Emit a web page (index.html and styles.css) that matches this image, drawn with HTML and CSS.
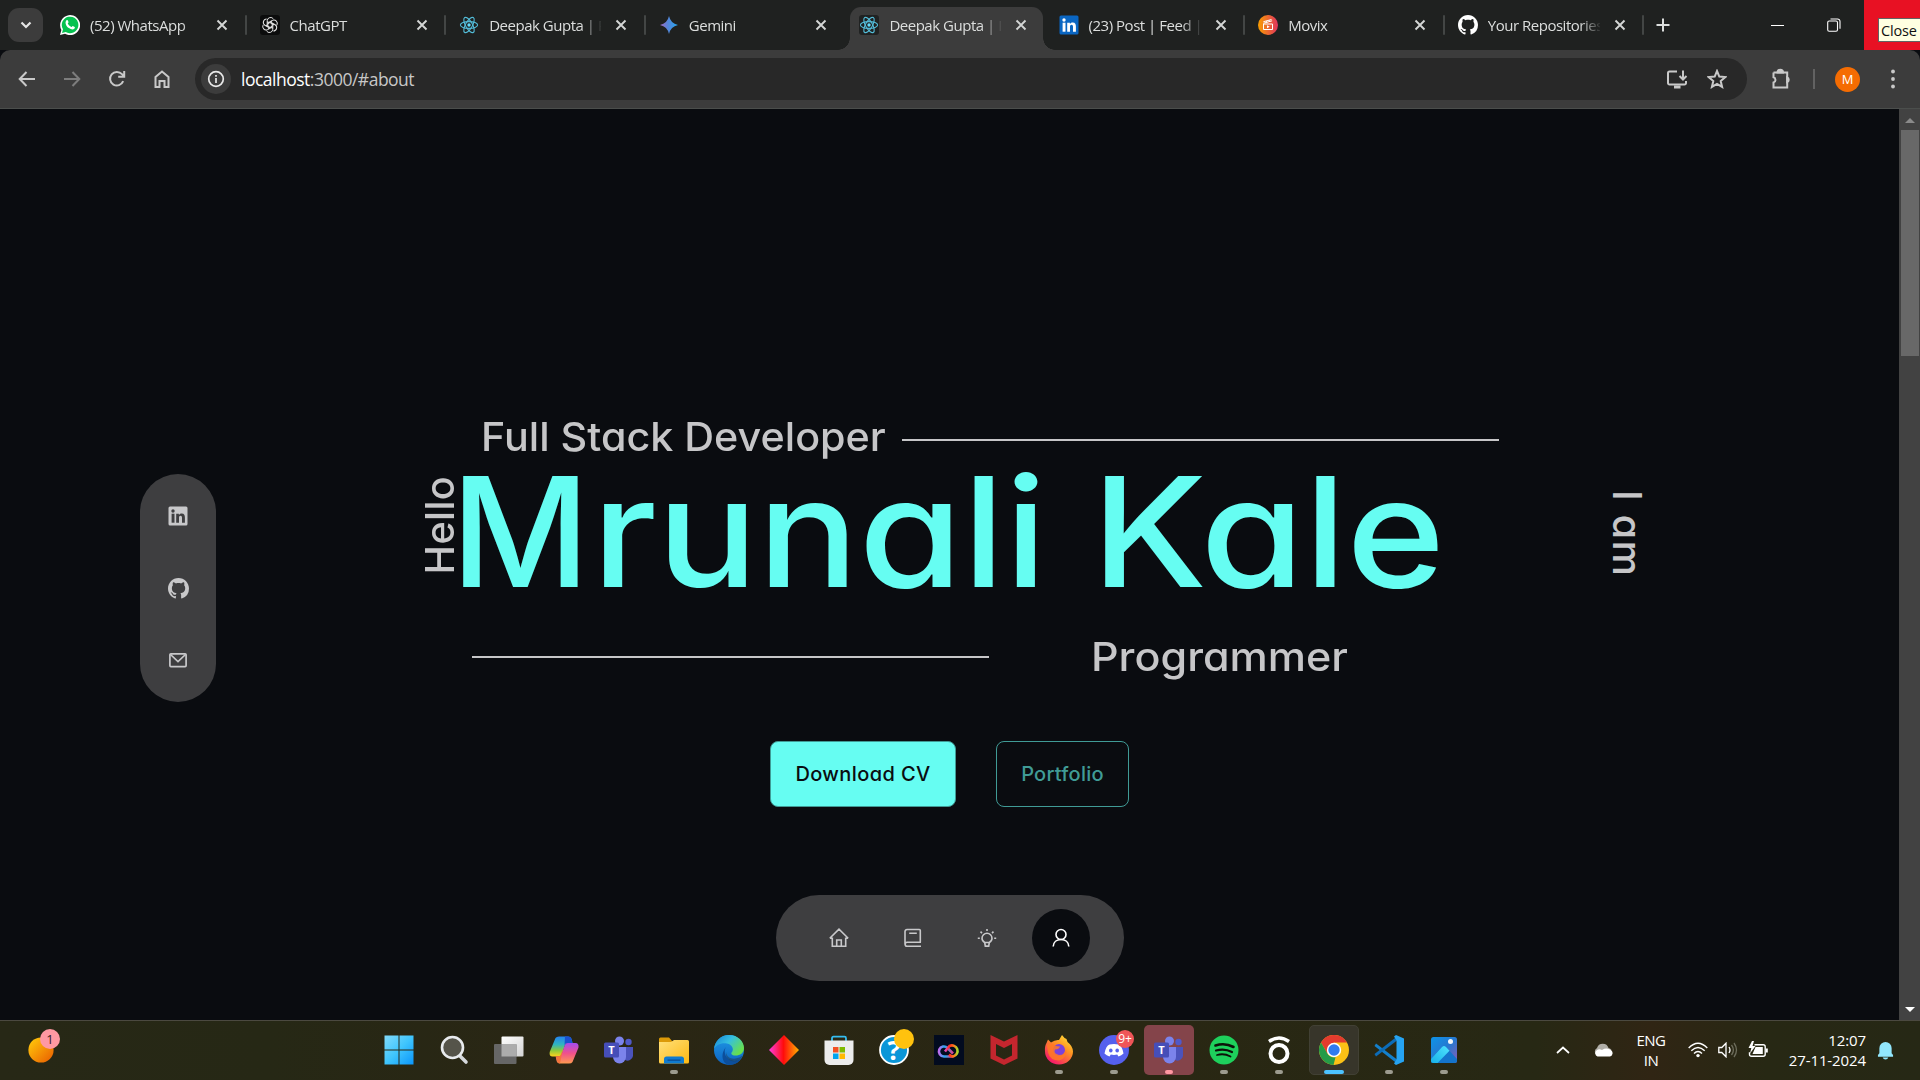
FILE: index.html
```html
<!DOCTYPE html>
<html lang="en">
<head>
<meta charset="utf-8">
<title>Deepak Gupta | Portfolio</title>
<link rel="stylesheet" href="styles.css">
</head>
<body>
<svg class="defs" aria-hidden="true">
  <defs>
    <linearGradient id="gWeather" x1="0" y1="0" x2="1" y2="1"><stop offset=".1" stop-color="#ffc40a"/><stop offset="1" stop-color="#e85a00"/></linearGradient>
    <linearGradient id="gWin" gradientUnits="userSpaceOnUse" x1="0" y1="0" x2="30" y2="30"><stop offset="0" stop-color="#84dcfb"/><stop offset=".5" stop-color="#3fc5fd"/><stop offset="1" stop-color="#0994fb"/></linearGradient>
    <linearGradient id="gGem" x1="0" y1="0" x2="1" y2="0"><stop offset="0" stop-color="#a36ac0"/><stop offset=".4" stop-color="#5a83d8"/><stop offset="1" stop-color="#22a7f0"/></linearGradient>
    <linearGradient id="gMovix" x1="0" y1="0" x2="1" y2="0"><stop offset="0" stop-color="#f89e00"/><stop offset="1" stop-color="#e0325f"/></linearGradient>
    <linearGradient id="gDia" x1="0" y1="0" x2="1" y2="0"><stop offset="0" stop-color="#ff3ce0"/><stop offset=".48" stop-color="#ff0c0c"/><stop offset="1" stop-color="#ffb000"/></linearGradient>
    <linearGradient id="gCopA" x1="0" y1="0" x2="0" y2="1"><stop offset="0" stop-color="#2483f0"/><stop offset=".4" stop-color="#2fb5c0"/><stop offset=".7" stop-color="#8cc93c"/><stop offset="1" stop-color="#ffd21c"/></linearGradient>
    <linearGradient id="gCopB" x1="0" y1="0" x2="0" y2="1"><stop offset="0" stop-color="#a24cf0"/><stop offset=".5" stop-color="#f0508c"/><stop offset="1" stop-color="#ff9a50"/></linearGradient>
    <linearGradient id="gFold" x1="0" y1="0" x2="1" y2="1"><stop offset="0" stop-color="#ffe07a"/><stop offset="1" stop-color="#fdb913"/></linearGradient>
    <linearGradient id="gEdgeA" x1="0" y1="0" x2="1" y2=".6"><stop offset="0" stop-color="#1580d8"/><stop offset=".5" stop-color="#35bfe0"/><stop offset="1" stop-color="#68e04c"/></linearGradient>
    <linearGradient id="gEdgeB" x1="0" y1="0" x2="0" y2="1"><stop offset="0" stop-color="#209be8"/><stop offset="1" stop-color="#0d62c0"/></linearGradient>
    <linearGradient id="gCC" x1="0" y1="0" x2="1" y2="0"><stop offset="0" stop-color="#e04cc8"/><stop offset=".35" stop-color="#ff2a1c"/><stop offset=".7" stop-color="#ff7a1c"/><stop offset="1" stop-color="#a8d82c"/></linearGradient>
    <linearGradient id="gCC2" x1="0" y1="0" x2="1" y2="0"><stop offset="0" stop-color="#c06cf0"/><stop offset=".4" stop-color="#28a8f0"/><stop offset="1" stop-color="#e0408c"/></linearGradient>
    <linearGradient id="gFox" x1="1" y1="0" x2=".3" y2="1"><stop offset="0" stop-color="#fff23c"/><stop offset=".45" stop-color="#ff9422"/><stop offset="1" stop-color="#f5156c"/></linearGradient>
    <linearGradient id="gPhoto" x1="0" y1="0" x2="1" y2="1"><stop offset="0" stop-color="#0d94e8"/><stop offset=".5" stop-color="#2678d0"/><stop offset="1" stop-color="#8a5cb8"/></linearGradient>
    <linearGradient id="gHill" x1="0" y1="1" x2="1" y2="0"><stop offset="0" stop-color="#16b0e8"/><stop offset="1" stop-color="#50e4ff"/></linearGradient>
    <linearGradient id="gTask" x1="0" y1="0" x2="1" y2="1"><stop offset="0" stop-color="#fff"/><stop offset="1" stop-color="#d4d4d4"/></linearGradient>
    <symbol id="x" viewBox="0 0 12 12"><path d="M1.500 1.500l9 9M10.500 1.500l-9 9" stroke="#d4d6d5" stroke-width="1.900" fill="none"/></symbol>
    <symbol id="react" viewBox="0 0 20 20"><g fill="none" stroke="#53bcd8" stroke-width="1.100"><ellipse cx="10" cy="10" rx="8.600" ry="3.400"/><ellipse cx="10" cy="10" rx="8.600" ry="3.400" transform="rotate(60 10 10)"/><ellipse cx="10" cy="10" rx="8.600" ry="3.400" transform="rotate(120 10 10)"/></g><circle cx="10" cy="10" r="1.700" fill="#61dafb"/></symbol>
    <symbol id="github" viewBox="0 0 16 16"><path fill="currentColor" d="M8 0C3.58 0 0 3.58 0 8c0 3.54 2.29 6.53 5.47 7.59.4.07.55-.17.55-.38 0-.19-.01-.82-.01-1.49-2.01.37-2.53-.49-2.69-.94-.09-.23-.48-.94-.82-1.13-.28-.15-.68-.52-.01-.53.63-.01 1.08.58 1.23.82.72 1.21 1.87.87 2.33.66.07-.52.28-.87.51-1.07-1.78-.2-3.64-.89-3.64-3.95 0-.87.31-1.59.82-2.15-.08-.2-.36-1.02.08-2.12 0 0 .67-.21 2.2.82.64-.18 1.32-.27 2-.27s1.36.09 2 .27c1.53-1.04 2.2-.82 2.2-.82.44 1.1.16 1.92.08 2.12.51.56.82 1.27.82 2.15 0 3.07-1.87 3.75-3.65 3.95.29.25.54.73.54 1.48 0 1.07-.01 1.93-.01 2.2 0 .21.15.46.55.38A8.01 8.01 0 0 0 16 8c0-4.42-3.58-8-8-8z"/></symbol>
    <symbol id="linkedin" viewBox="0 0 20 20"><rect x=".5" y=".5" width="19" height="19" rx="1.500" fill="currentColor"/><g fill="var(--cut)"><circle cx="5" cy="5" r="1.700"/><rect x="3.600" y="7.700" width="2.900" height="9"/><path d="M8.200 7.700h2.700v1.200c.5-.8 1.400-1.500 2.800-1.500 2.600 0 3.200 1.800 3.200 4.200v5.100H14v-4.600c0-1.200-.2-2.300-1.500-2.300s-1.500 1.200-1.500 2.300v4.600H8.200z"/></g></symbol>
    <symbol id="teams" viewBox="0 0 30 30"><circle cx="24.500" cy="7" r="3.200" fill="#5059c9"/><path d="M19 12h10v9a5.500 5.500 0 0 1-8 4z" fill="#4b53bc"/><circle cx="15.500" cy="6" r="4.500" fill="#7b83eb"/><path d="M9 12h13v10a6.500 6.500 0 0 1-13 0z" fill="#7b83eb"/><rect x="0" y="7.500" width="15" height="15" rx="1.500" fill="#464eb8"/><text x="7.500" y="19" fill="#fff" font-family="Open Sans" font-weight="700" font-size="11" text-anchor="middle">T</text></symbol>
  </defs>
</svg>

<header class="tabs">
  <button class="tab-search"><svg width="12" height="8" viewBox="0 0 12 8"><path d="M1.500 1.500L6 6l4.500-4.500" fill="none" stroke="#e6e6e6" stroke-width="2.200"/></svg></button>
  <div class="tab">
    <svg class="fav" viewBox="0 0 20 20"><path d="M0 20l1.400-5A10 10 0 1 1 5 18.700z" fill="#fff"/><path d="M2 18l1-3.700A8.300 8.300 0 1 1 5.700 17z" fill="#06c250"/><path d="M6.300 5.400c.6-.6 1.300-.5 1.600.2l.6 1.500c.2.5-.6 1.100-.8 1.500.8 1.600 2 2.700 3.700 3.500.4-.1 1-1.200 1.400-1.100l1.900.9c.4.3.1 1.300-.4 1.800-1.300 1.200-3.300.8-5.500-.6C6.500 11.500 4.400 7.600 6.300 5.400z" fill="#fff"/></svg>
    <span class="title">(52) WhatsApp</span><svg class="close"><use href="#x"/></svg>
  </div>
  <div class="tab">
    <svg class="fav" viewBox="0 0 20 20"><rect width="20" height="20" rx="3" fill="#0b0c0c"/><g fill="none" stroke="#e2e2e2" stroke-width="1"><path id="petal" d="M7.200 10.800V5.700a3.400 3.400 0 0 1 6.300-1.600M7.500 9l4.600-2.700"/><use href="#petal" transform="rotate(60 10 10)"/><use href="#petal" transform="rotate(120 10 10)"/><use href="#petal" transform="rotate(180 10 10)"/><use href="#petal" transform="rotate(240 10 10)"/><use href="#petal" transform="rotate(300 10 10)"/></g></svg>
    <span class="title">ChatGPT</span><svg class="close"><use href="#x"/></svg>
  </div>
  <div class="tab"><svg class="fav"><use href="#react"/></svg><span class="title">Deepak Gupta | Portfolio</span><svg class="close"><use href="#x"/></svg></div>
  <div class="tab plain">
    <svg class="fav" viewBox="0 0 20 20"><path d="M10 1q1.600 7.400 9 9-7.400 1.600-9 9-1.600-7.400-9-9 7.400-1.600 9-9z" fill="url(#gGem)"/></svg>
    <span class="title">Gemini</span><svg class="close"><use href="#x"/></svg>
  </div>
  <div class="tab active"><svg class="fav dark"><use href="#react"/></svg><span class="title">Deepak Gupta | Portfolio</span><svg class="close"><use href="#x"/></svg></div>
  <div class="tab"><svg class="fav li"><use href="#linkedin"/></svg><span class="title">(23) Post | Feed | LinkedIn</span><svg class="close"><use href="#x"/></svg></div>
  <div class="tab">
    <svg class="fav" viewBox="0 0 20 20"><circle cx="10" cy="10" r="10" fill="url(#gMovix)"/><g fill="none" stroke="#fff" stroke-width="1"><path d="M5.500 9h9v5.500h-9zM5.300 8.300l8.800-2.500M5.400 6.700L13.500 4.500M8 6l1 1.500M11 5.200l1 1.500"/></g><path d="M9 10.300l2.700 1.500L9 13.300z" fill="#fff"/></svg>
    <span class="title">Movix</span><svg class="close"><use href="#x"/></svg>
  </div>
  <div class="tab"><svg class="fav gh"><use href="#github"/></svg><span class="title">Your Repositories</span><svg class="close"><use href="#x"/></svg></div>
  <svg class="plus" viewBox="0 0 14 14"><path d="M7 .5v13M.5 7h13" stroke="#dcdedd" stroke-width="2"/></svg>
  <div class="window-buttons">
    <svg viewBox="0 0 14 14"><path d="M0 7.500h13" stroke="#fff"/></svg>
    <svg viewBox="0 0 14 14"><g fill="none" stroke="#fff" stroke-width="1.100"><rect x=".7" y="3" width="9.800" height="10.200" rx="1.500"/><path d="M3.500 1h7A2.500 2.500 0 0 1 13 3.500v7.300"/></g></svg>
  </div>
  <div class="window-close"><span class="tip">Close</span></div>
</header>

<div class="toolbar">
  <div class="nav-buttons">
    <svg viewBox="0 0 20 20"><path d="M18 10H3M9.500 3L2.700 10l6.800 7" /></svg>
    <svg class="off" viewBox="0 0 20 20"><path d="M2 10h15M10.500 3l6.800 7-6.800 7"/></svg>
    <svg viewBox="0 0 20 20"><path d="M16.200 12.200A6.800 6.800 0 1 1 15 5.200l2 2.300M17.200 2v5.800h-6"/></svg>
    <svg viewBox="0 0 20 20"><path d="M3.500 18V8L10 2.500 16.500 8v10h-4v-6h-5v6z"/></svg>
  </div>
  <div class="address">
    <span class="info"><svg viewBox="0 0 18 18"><circle cx="9" cy="9" r="7.300"/><path d="M9 8v5M9 5v1.700"/></svg></span>
    <span class="url"><b>localhost</b>:3000/#about</span>
    <svg class="install" viewBox="0 0 22 20"><path d="M11 2.500H3.500a1.500 1.500 0 0 0-1.500 1.500v10a1.500 1.500 0 0 0 1.500 1.500h15A1.500 1.500 0 0 0 20 14v-2M17 1.500v8.500M13.500 7l3.500 3.500L20.500 7"/><path d="M8 18h6.500" stroke-width="3"/></svg>
    <svg class="star" viewBox="0 0 20 20"><path d="M10 2l2.300 5.600 6 .5-4.600 3.900 1.400 5.900-5.100-3.100-5.100 3.100 1.400-5.900L1.700 8.100l6-.5z"/></svg>
  </div>
  <svg class="ext" viewBox="0 0 22 22"><path d="M3.500 4.500h4.600M13 4.500h4.200v4.800M17.200 13.500V19.500H3.500v-5a2.700 2.700 0 0 0 0-5.200V4.500M7.500 4.500h6M17.200 9v5"/><path d="M7.500 4.500a2.700 2.700 0 0 1 5.500 0zM17.200 9.500a2.500 2.500 0 0 1 0 4.600z" fill="#c9c9c9"/></svg>
  <i class="bar"></i>
  <span class="avatar">M</span>
  <svg class="dots" viewBox="0 0 6 20"><circle cx="3" cy="2.500" r="1.900"/><circle cx="3" cy="10" r="1.900"/><circle cx="3" cy="17.500" r="1.900"/></svg>
</div>

<div class="viewport">
  <main class="page">
    <aside class="social">
      <svg><use href="#linkedin"/></svg>
      <svg class="big"><use href="#github"/></svg>
      <svg viewBox="0 0 20 20"><rect x="1.900" y="3.800" width="16.200" height="12.800" rx="1" fill="none" stroke="currentColor" stroke-width="1.700"/><path d="M2.500 4.500L10 11.500l7.500-7" fill="none" stroke="currentColor" stroke-width="1.700"/></svg>
    </aside>
    <section class="hero">
      <div class="row role"><h2>Full Stack Developer</h2><hr></div>
      <div class="row name"><span class="vert hello">Hello</span><h1><span class="initial">M</span><span class="rest">runali Kale</span></h1><span class="vert iam">I am</span></div>
      <div class="row prog"><hr><h2>Programmer</h2></div>
      <div class="row actions"><a class="btn primary">Download CV</a><a class="btn">Portfolio</a></div>
      <nav class="dock">
        <a><svg viewBox="0 0 20 20"><path d="M.8 10.300L10 1.200l9.200 9.100M.8 10.300h2.500v8h13.400v-8h2.500M7.700 18v-6h4.600v6"/></svg></a>
        <a><svg viewBox="0 0 20 20"><path d="M18 14.200H4.200a2 2 0 0 0 0 4.100H18M17.300 14.200V2.500a1 1 0 0 0-1-1H4a2 2 0 0 0-2 2v13M6.200 5.300h7.600"/></svg></a>
        <a><svg viewBox="0 0 20 20"><path d="M7.700 14.500C5.800 13.500 5 12 5 10.300a5 5 0 0 1 10 0c0 1.700-.8 3.200-2.700 4.200zM7.700 14.500l.6 3.600h3.400l.6-3.600M10 1v2M3.500 3.600L5 5.100M16.500 3.600L15 5.100M.8 10.200h2M17.200 10.200h2"/></svg></a>
        <a class="on"><svg viewBox="0 0 20 20"><circle cx="10" cy="6.500" r="5"/><path d="M2.200 18.500c.2-4.400 3.500-7 7.800-7s7.600 2.600 7.800 7"/></svg></a>
      </nav>
    </section>
  </main>
  <div class="scrollbar"><i class="up"></i><b></b><i class="down"></i></div>
</div>

<footer class="taskbar">
  <div class="weather"><svg viewBox="0 0 26 26"><circle cx="13" cy="13" r="12.600" fill="url(#gWeather)"/></svg><em>1</em></div>
  <div class="apps">
    <a><svg viewBox="0 0 30 30"><path d="M.5.500h14v14H.500zM15.500.500h14v14h-14zM.5 15.500h14v14H.500zM15.500 15.500h14v14h-14z" fill="url(#gWin)"/></svg></a>
    <a><svg viewBox="0 0 30 30"><path d="M20 20l7 7" stroke="#d5d8dc" stroke-width="3.600" stroke-linecap="round"/><circle cx="13.500" cy="12.500" r="10.500" fill="#55544a" stroke="#e8ebee" stroke-width="2.600"/></svg></a>
    <a><svg viewBox="0 0 30 30"><rect x="7.500" y="1.500" width="22" height="20" rx="1" fill="url(#gTask)"/><rect x="0" y="9" width="22.500" height="20" rx="1" fill="#666"/><rect x="7.500" y="9" width="15" height="12.500" fill="#acacac"/></svg></a>
    <a><svg viewBox="0 0 30 30"><path d="M6.500 3Q7.500 1.500 10 1.500h9q3 0 3.700 3l.8 3.500h-5q-2 0-2.700 2.500l-2.500 8q-.8 3-3.300 3H3.500Q0 21.500.7 17z" fill="url(#gCopA)"/><path d="M16 1.500h3q3 0 3.700 3l.8 3.500h-5q-2 0-3 2z" fill="#1a50d0"/><path d="M23.500 27Q22.500 28.500 20 28.500h-9q-3 0-3.500-3l-.8-4H10q2 0 2.700-2.500l2.800-8q.8-3 3.300-3h7.700q3.500 0 3 4.500z" fill="url(#gCopB)"/><path d="M14 14l-2.200 5.500q-.8 2-2.600 2H6.700l1.600 5q.7 2 2.700 2z" fill="#f4743c"/></svg></a>
    <a><svg><use href="#teams"/></svg></a>
    <a class="run"><svg viewBox="0 0 30 30"><path d="M0 4a1.500 1.500 0 0 1 1.500-1.500H10L13 6v5H0z" fill="#dc9a08"/><path d="M0 9.500V7h12l3-2h13.500A1.500 1.500 0 0 1 30 6.500V27a1.500 1.500 0 0 1-1.500 1.500h-27A1.500 1.500 0 0 1 0 27z" fill="url(#gFold)"/><path d="M5 28.500V24q0-2.500 2.500-2.500h15Q25 21.500 25 24v4.500z" fill="#0f7bd0"/><rect x="8.500" y="24.500" width="13" height="1.300" fill="#0a4d94"/></svg></a>
    <a><svg viewBox="0 0 30 30"><circle cx="15" cy="15" r="15" fill="url(#gEdgeB)"/><path d="M0 14C1 6 7 0 15 0c9 0 15 6.500 15 13 0 5-4 7.500-8.500 7.500-4 0-5-2-3.500-3.500 2-2.500.5-7.500-5-8.500C7 7.500 2 10 0 14z" fill="url(#gEdgeA)"/><path d="M12 12c-3 4-1 13 8 14 3 .3 6-1 8-3.500C25.500 27 21 30 15.500 30 9 29.500 5.500 20 12 12z" fill="#0c4f9c"/><path d="M12 17c.5 5 5 7.500 9.500 6.500 3-.5 5-1.500 7-3-2 6-9 7-13 4.500-3-2-4-5-3.500-8z" fill="#28261a" opacity=".35"/></svg></a>
    <a><svg viewBox="0 0 30 30"><path d="M15 0l15 15-15 15L0 15z" fill="url(#gDia)"/></svg></a>
    <a><svg viewBox="0 0 30 30"><path d="M8 6V3.200Q8 1.700 9.500 1.700h11Q22 1.700 22 3.200V6" fill="none" stroke="#35bdf0" stroke-width="1.800"/><path d="M.5 5.500h29V25a5 5 0 0 1-5 5h-19a5 5 0 0 1-5-5z" fill="#ececec"/><path d="M9 12h5.500v5.500H9z" fill="#f25022"/><path d="M15.500 12H21v5.500h-5.500z" fill="#7fba00"/><path d="M9 18.500h5.500V24H9z" fill="#00a4ef"/><path d="M15.500 18.500H21V24h-5.500z" fill="#ffb900"/></svg></a>
    <a class="help"><svg viewBox="0 0 30 30"><circle cx="15" cy="15" r="14" fill="#0a96d8" stroke="#fff" stroke-width="1.800"/><text x="15" y="25" fill="#fff" font-family="Open Sans" font-weight="700" font-size="27" text-anchor="middle">?</text></svg><em></em></a>
    <a><svg viewBox="0 0 30 30"><path d="M0 0h30v30H0z" fill="#020b1f"/><g fill="none" stroke-width="2.600"><path d="M19 18.500l-5.500-5.500a5 5 0 1 0-3.500 8.500h9" stroke="url(#gCC2)"/><path d="M11 16.500l4.500-5.500a5.600 5.600 0 1 1 3.700 10.500q-2.200 0-4.200-2" stroke="url(#gCC)"/></g></svg></a>
    <a><svg viewBox="0 0 30 30"><path d="M1.500 0L15 6.500 28.500 0v23.500L15 30 1.500 23.500zM7 9v11.500l8 4 8-4V9l-8 4z" fill="#c4262e" fill-rule="evenodd"/></svg></a>
    <a class="run"><svg viewBox="0 0 30 30"><path d="M2.500 8L4 4.500 7 7.500q4-3 8-2.500l3-5q2 3 4.500 4l1 3q5 3.500 5.500 9.500A14 13 0 0 1 1 16.500Q.5 11 2.500 8z" fill="url(#gFox)"/><circle cx="15" cy="15" r="6" fill="#7a42dc"/><path d="M3 10q5-3 9 1l4 .5q-1 3-5 3-2 4 4 5.500 6 0 7-6 2 9-7 11.500-9 0-11-8z" fill="#ff7a24" opacity=".85"/></svg></a>
    <a class="run discord"><svg viewBox="0 0 30 30"><circle cx="15" cy="15" r="15" fill="#5560ee"/><path d="M10.500 9.500q4.500-1.200 9 0 3.500 1 5 9-2 2-5 3l-1.300-2q-3.200.8-6.400 0l-1.300 2q-3-1-5-3 1.500-8 5-9z" fill="#fff"/><ellipse cx="11.800" cy="15.500" rx="1.800" ry="2" fill="#5560ee"/><ellipse cx="18.200" cy="15.500" rx="1.800" ry="2" fill="#5560ee"/></svg><em>9+</em></a>
    <a class="run alert"><svg><use href="#teams"/></svg></a>
    <a class="run"><svg viewBox="0 0 30 30"><circle cx="15" cy="15" r="14.500" fill="#1ed05c"/><g fill="none" stroke="#0c1209" stroke-linecap="round"><path d="M6.500 10.500Q16 7.500 24.500 12" stroke-width="2.600"/><path d="M7 15.500Q15.500 13 23 17" stroke-width="2.200"/><path d="M8 20Q15 18 21.500 21.500" stroke-width="1.800"/></g></svg></a>
    <a class="run"><svg viewBox="0 0 30 30"><circle cx="15" cy="18.500" r="8.500" fill="none" stroke="#fff" stroke-width="4"/><path d="M5 6.500Q15-.5 25 6.500" fill="none" stroke="#fff" stroke-width="3.400"/></svg></a>
    <a class="run focus"><svg viewBox="0 0 30 30"><circle cx="15" cy="15" r="15" fill="#fbc116"/><path d="M2 7.500A15 15 0 0 1 28 7.500H15L8.500 18.700z" fill="#e33b2e"/><path d="M2 7.500l6.500 11.200q2.500 4 8 3.600L14.500 30A15 15 0 0 1 2 7.500z" fill="#259b48"/><circle cx="15" cy="15" r="7.200" fill="#fff"/><circle cx="15" cy="15" r="5.700" fill="#2f7bef"/></svg></a>
    <a class="run"><svg viewBox="0 0 30 30"><path d="M2 8.500L23 24.500v4L.5 11z" fill="#1480cc"/><path d="M.5 19L23 1.500v4L2 21.500z" fill="#0c6cb8"/><path d="M22 0l8 3.500v23L22 30l-2-1.500 2.500-4v-19L20 1.500z" fill="#26a4f2"/></svg></a>
    <a class="run"><svg viewBox="0 0 30 30"><rect x="2" y="2" width="26" height="26" rx="2.500" fill="url(#gPhoto)"/><path d="M2 24l11-12q2-2 4 0l11 12v1.500q0 2.500-2.500 2.500h-21Q2 28 2 25.500z" fill="#1474cc"/><path d="M2 24l11-12q2-2 4 0l3.500 3.800L8.500 28h-4Q2 28 2 25.500z" fill="url(#gHill)"/><circle cx="21.500" cy="6.500" r="2.500" fill="#f3f6fa"/></svg></a>
  </div>
  <div class="tray">
    <svg class="chev" viewBox="0 0 14 8"><path d="M1 7l6-5.500L13 7" fill="none" stroke="#fff" stroke-width="1.700"/></svg>
    <svg class="cloud" viewBox="0 0 20 14"><path d="M5 12.500a4 4 0 0 1-1-7.500 6 6 0 0 1 11.500 0q2 .3 3 2z" fill="#b0aea8"/><path d="M4.500 13.500a3.500 3.500 0 0 1-1-6Q6 5.500 9 7q5-3 9.500.5a3.600 3.600 0 0 1-1.500 6z" fill="#fff"/></svg>
    <div class="lang">ENG<br>IN</div>
    <svg class="wifi" viewBox="0 0 20 16"><g fill="none" stroke="#fff" stroke-width="1.400"><path d="M.7 6Q10-3.500 19.300 6M3.300 8.800q6.700-6.600 13.400 0M6 11.600q4-4 8 0"/></g><circle cx="10" cy="13.600" r="1.700" fill="#fff"/></svg>
    <svg class="vol" viewBox="0 0 20 16"><path d="M.8 5.500h3L8 1.200v13.600l-4.200-4.300h-3zM11 5q2 3 0 6" fill="none" stroke="#fff" stroke-width="1.300"/><path d="M13.500 3q3.800 5 0 10M16 1q5 7 0 14" fill="none" stroke="#6d6d5c" stroke-width="1.300"/></svg>
    <svg class="bat" viewBox="0 0 20 18"><path d="M6.500 3.700h8.700q2 0 2 2v7.600q0 2-2 2H3.500q-2 0-2-2v-2" fill="none" stroke="#fff" stroke-width="1.400"/><path d="M7.500 6h7.300v7H4.500zM18 7.500h1.800v4H18zM4 0L.5 7h2.800L2 12.500 7.500 5h-3L6 0z" fill="#fff"/></svg>
    <div class="clock">12:07<br>27-11-2024</div>
    <svg class="bell" viewBox="0 0 18 20"><path d="M1 16.500V14.800l1.500-2V7.500a6.500 6.500 0 0 1 13 0v5.300l1.500 2v1.700zM6 17.500h6q-.7 2-3 2t-3-2z" fill="#92e7fd"/></svg>
  </div>
</footer>
</body>
</html>
```
FILE: styles.css
```css
* { box-sizing: border-box; }
body {
  margin: 0; width: 1920px; height: 1080px; overflow: hidden;
  display: flex; flex-direction: column;
  background: #0a0c10; color: #dcdedd;
  font-family: "Open Sans", "Noto Sans", sans-serif;
}
svg { display: block; flex: none; }
.defs { position: absolute; width: 0; height: 0; }

/* Tab strip */
.tabs { flex: none; height: 50px; display: flex; align-items: center; background: #1f2120; }
.tab-search { flex: none; width: 35px; height: 34px; margin: 0 8px; padding: 0; border: 0; border-radius: 11px; background: #3c3c3c; display: grid; place-items: center; }
.tab { flex: none; position: relative; width: 199.600px; height: 42px; display: flex; align-items: center; padding-left: 9px; font-size: 15px; letter-spacing: -.48px; }
.tab::after { content: ""; position: absolute; right: 4px; top: 11px; width: 2px; height: 20px; border-radius: 1px; background: #434645; }
.tab.plain::after, .tab.active::after { display: none; }
.tab.active { height: 43px; margin-top: 7px; background: #3c3c3c; border-radius: 11px 11px 0 0; width: 192.700px; margin-left: 1px; margin-right: 6.500px; padding-bottom: 7px; }
.tab.active::before { content: ""; position: absolute; left: -12px; right: -12px; bottom: 0; height: 12px; background: radial-gradient(circle at 0 0, transparent 11.500px, #3c3c3c 12px) left / 12px 12px no-repeat, radial-gradient(circle at 100% 0, transparent 11.500px, #3c3c3c 12px) right / 12px 12px no-repeat; }
.fav { width: 20px; height: 20px; }
.fav.dark { background: #202222; border-radius: 3px; }
.fav.li { color: #0a66c2; --cut: #fff; }
.fav.gh { color: #fff; }
.title { width: 112px; margin-left: 10px; overflow: hidden; white-space: nowrap; -webkit-mask: linear-gradient(90deg, #000 92px, transparent 114px); }
.close { width: 12px; height: 12px; margin-left: 14px; }
.plus { width: 14px; height: 14px; margin-left: 8px; }
.window-buttons { flex: 1; display: flex; justify-content: flex-end; gap: 42px; padding-right: 23px; }
.window-buttons svg { width: 14px; height: 14px; }
.window-close { width: 56px; height: 50px; padding: 18px 0 0 14px; background: #e81123; overflow: hidden; }
.tip { display: block; height: 24px; width: 42px; padding-left: 2px; border: 1px solid #636363; border-right: 0; background: #ffffe1; color: #101010; font-size: 14.500px; line-height: 23px; letter-spacing: -.2px; white-space: nowrap; }

/* Toolbar */
.toolbar { flex: none; height: 59px; display: flex; align-items: center; background: #3c3c3c; border-bottom: 1px solid #4b4e4c; border-radius: 10px 10px 0 0; }
.toolbar svg { fill: none; stroke: #c9c9c9; stroke-width: 2; }
.nav-buttons { display: flex; gap: 25px; padding-left: 17px; width: 195px; }
.nav-buttons svg { width: 20px; height: 20px; }
.nav-buttons .off { stroke: #7d7d7d; }
.address { width: 1552px; height: 42px; border-radius: 21px; background: #282828; display: flex; align-items: center; padding-left: 6px; }
.info { width: 30px; height: 30px; border-radius: 50%; background: #3c3c3c; display: grid; place-items: center; }
.info svg { width: 18px; height: 18px; stroke: #e8e8e8; stroke-width: 1.700; }
.url { flex: 1; margin-left: 10px; padding-bottom: 1px; font-size: 17.500px; color: #c7c7c7; letter-spacing: -.5px; }
.url b { font-weight: 400; color: #fff; }
.install { width: 22px; height: 20px; margin-right: 19px; }
.star { width: 20px; height: 20px; margin-right: 20px; stroke-width: 1.700; }
.ext { width: 22px; height: 22px; margin-left: 23px; }
.bar { width: 2px; height: 20px; margin-left: 21px; background: #626262; }
.avatar { width: 25px; height: 25px; margin-left: 20px; border-radius: 50%; background: #f56c02; color: #fff; font-size: 13px; line-height: 25px; text-align: center; }
.toolbar .dots { width: 6px; height: 20px; margin-left: 30px; fill: #c9c9c9; stroke: none; }

/* Portfolio page */
.viewport { flex: none; height: 911px; display: flex; }
.page { flex: 1; display: flex; background: #0a0c10; color: #c6c6c8; font-family: Inter, "Open Sans", sans-serif; font-weight: 500; font-feature-settings: "cv11"; }
.social { width: 76px; height: 228px; margin: 365px 0 0 140px; padding: 32px 0; border-radius: 38px; background: #3e3e40; --cut: #3e3e40; display: flex; flex-direction: column; align-items: center; justify-content: space-between; color: #c8c8ca; }
.social svg { width: 20px; height: 20px; }
.social .big { width: 21px; height: 21px; }
.hero { width: 1240px; margin-left: 204px; padding-top: 300px; }
.row { display: flex; }
h1, h2 { margin: 0; font-weight: 500; white-space: nowrap; }
h2, .initial, .rest { transform-origin: left; }
hr { margin: 0; border: 0; height: 2px; background: #c6c6c8; }
h2, .vert { font-size: 39.500px; }
.role { height: 60px; padding-left: 61px; align-items: center; }
.role h2 { width: 421px; line-height: 56px; padding-bottom: 4px; transform: scaleX(1.045); }
.role hr { width: 597px; margin-top: 2px; }
.name { height: 140px; align-items: flex-start; }
h1 { width: 1156px; display: flex; margin: -7px 0 0 -9px; font-size: 152px; line-height: 140px; color: #66fdf2; }
.initial { width: 141px; }
.rest { transform: scaleX(1.104); }
.vert { writing-mode: vertical-rl; width: 40px; line-height: 40px; white-space: nowrap; }
.hello { margin-top: 7px; letter-spacing: .4px; transform: rotate(180deg); }
.iam { margin-top: 21px; letter-spacing: 1.700px; }
.prog { height: 96px; padding-left: 52px; align-items: center; }
.prog hr { width: 517px; }
.prog h2 { margin-left: 102px; transform: scaleX(1.09); }
.actions { margin-top: 36px; padding-left: 350px; gap: 40px; }
.btn { height: 66px; border: 1px solid #409b96; border-radius: 8px; color: #409b96; font-size: 20px; letter-spacing: .25px; line-height: 64px; width: 133px; text-align: center; white-space: nowrap; }
.btn.primary { width: 186px; background: #66fdf2; color: #0a0c10; letter-spacing: .4px; }
.dock { width: 348px; height: 86px; margin: 88px 0 0 356px; padding: 14px 34px; border-radius: 43px; background: #3e3e40; display: flex; gap: 16px; }
.dock a { width: 58px; height: 58px; border-radius: 50%; display: grid; place-items: center; color: #c8c8ca; }
.dock svg { width: 20px; height: 20px; fill: none; stroke: currentColor; stroke-width: 1.600; }
.dock .on { background: #0a0c10; color: #fff; }
.scrollbar { width: 21px; background: #424242; display: flex; flex-direction: column; align-items: center; padding: 9px 0 8px; }
.scrollbar i { border: 5px solid transparent; }
.scrollbar .up { border-top: 0; border-bottom-color: #8a8a8a; margin-bottom: 7px; }
.scrollbar .down { border-bottom: 0; border-top-color: #fff; margin-top: auto; }
.scrollbar b { width: 18px; height: 226px; background: #686868; }

/* Taskbar */
.taskbar { flex: none; height: 60px; padding-bottom: 1px; border-top: 1px solid #4b4940; display: flex; align-items: center; background: linear-gradient(90deg, #272816 0, #262815 14%, #2a2614 30%, #292713 60%, #272814 80%, #302514 86%, #272814 92%, #262815); font-size: 15px; color: #fff; }
.weather { position: relative; width: 373px; padding-left: 28px; }
.weather svg { width: 26px; height: 26px; }
.weather em, .discord em, .help em { position: absolute; border-radius: 50%; font-style: normal; text-align: center; }
.weather em { left: 40px; top: -8px; width: 20px; height: 20px; background: #ff98a2; color: #35201f; font-size: 13px; line-height: 20px; }
.apps { display: flex; gap: 5px; }
.apps a { position: relative; width: 50px; height: 50px; border-radius: 5px; display: grid; place-items: center; }
.weather, .tray { flex: none; }
.apps { margin-left: 1px; }
.apps svg { width: 30px; height: 30px; }
.run::after { content: ""; position: absolute; left: 21px; bottom: 1px; width: 8px; height: 4px; border-radius: 2px; background: #9c9b8f; }
.alert { background: #84444a; }
.alert::after { background: #ff98a2; }
.focus { background: #37352a; border: 1px solid #414034; }
.apps .focus::after { left: 14px; bottom: 0; width: 20px; background: #4cc2ff; }
.discord em { left: 27px; top: 5px; width: 18px; height: 18px; background: #f05558; font-size: 12px; line-height: 17px; }
.help em { left: 25px; top: 4px; width: 20px; height: 20px; background: #ffc20e; }
.tray { display: flex; align-items: center; line-height: 20px; }
.chev { width: 14px; height: 8px; margin-left: 87px; }
.cloud { width: 20px; height: 14px; margin-left: 23px; }
.lang { width: 30px; margin-left: 23px; text-align: center; font-size: 15px; letter-spacing: -.5px; }
.wifi { width: 20px; height: 16px; margin-left: 22px; }
.vol { width: 20px; height: 16px; margin-left: 10px; }
.bat { width: 20px; height: 18px; margin-left: 10px; }
.clock { width: 90px; margin-left: 8px; text-align: right; font-size: 15px; letter-spacing: -.1px; }
.bell { width: 17px; height: 19px; margin-left: 11px; }
```
